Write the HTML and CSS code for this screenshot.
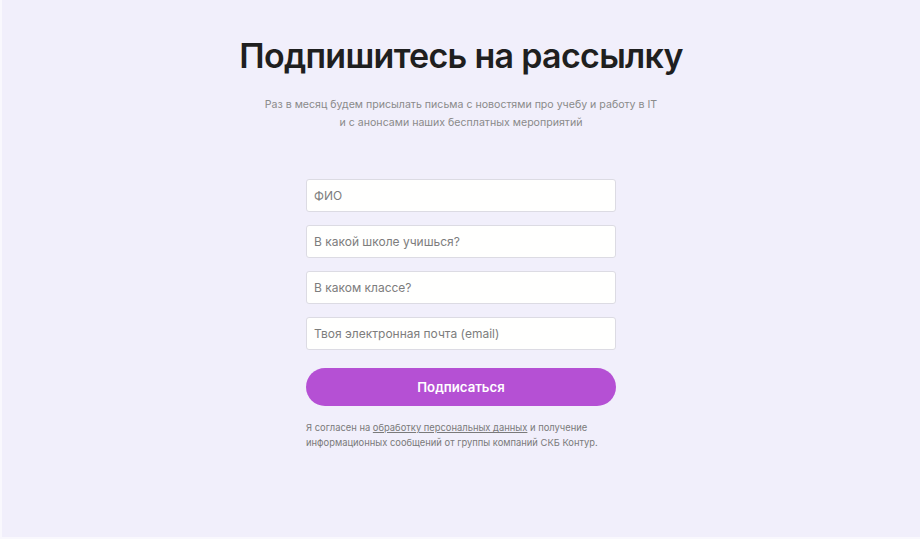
FILE: index.html
```html
<!DOCTYPE html>
<html lang="ru">
<head>
<meta charset="utf-8">
<link rel="stylesheet" href="styles.css">
</head>
<body>
<main class="page">
  <h1 class="title">Подпишитесь на рассылку</h1>
  <p class="lead">Раз в месяц будем присылать письма с новостями про учебу и работу в IT<br>и с анонсами наших бесплатных мероприятий</p>
  <form class="form">
    <input class="field" type="text" placeholder="ФИО">
    <input class="field" type="text" placeholder="В какой школе учишься?">
    <input class="field" type="text" placeholder="В каком классе?">
    <input class="field" type="text" placeholder="Твоя электронная почта (email)">
    <button class="submit" type="button">Подписаться</button>
    <p class="consent">Я согласен на <a href="#" class="link">обработку персональных данных</a> и получение информационных сообщений от группы компаний СКБ Контур.</p>
  </form>
</main>
</body>
</html>
```
FILE: styles.css
```css
html, body {
  margin: 0;
  padding: 0;
  height: 100%;
  background: #f9f8fd;
}
body {
  font-family: Inter, "Noto Sans", sans-serif;
}
.page {
  box-sizing: border-box;
  margin-left: 2px;
  height: 537px;
  background: #f1effb;
  display: flex;
  flex-direction: column;
  align-items: center;
  padding-top: 34px;
}
.title {
  margin: 0;
  font-size: 34px;
  font-weight: 600;
  color: #1f1f1f;
  line-height: 44px;
  letter-spacing: -0.7px;
}
.lead {
  margin: 18px 0 0;
  font-size: 10.6px;
  line-height: 18px;
  color: #8a8a8a;
  text-align: center;
}
.form {
  margin-top: 47px;
  width: 310px;
  display: flex;
  flex-direction: column;
  gap: 13px;
}
.field {
  box-sizing: border-box;
  height: 33px;
  width: 100%;
  border: 1px solid #dcdbe3;
  border-radius: 3px;
  background: #fffffe;
  padding: 0 7px;
  font-family: Inter, "Noto Sans", sans-serif;
  font-size: 12px;
  color: #333;
  outline: none;
}
.field::placeholder {
  color: #7d7d7d;
}
.submit {
  margin-top: 5px;
  height: 38px;
  border: none;
  border-radius: 19px;
  background: #b550d4;
  color: #fff;
  font-family: Inter, "Noto Sans", sans-serif;
  font-size: 13.2px;
  font-weight: 600;
}
.consent {
  margin: 1px 0 0;
  font-size: 9.4px;
  line-height: 15px;
  color: #7a7a7a;
}
.link {
  color: #7a7a7a;
  text-decoration: underline;
}
```
